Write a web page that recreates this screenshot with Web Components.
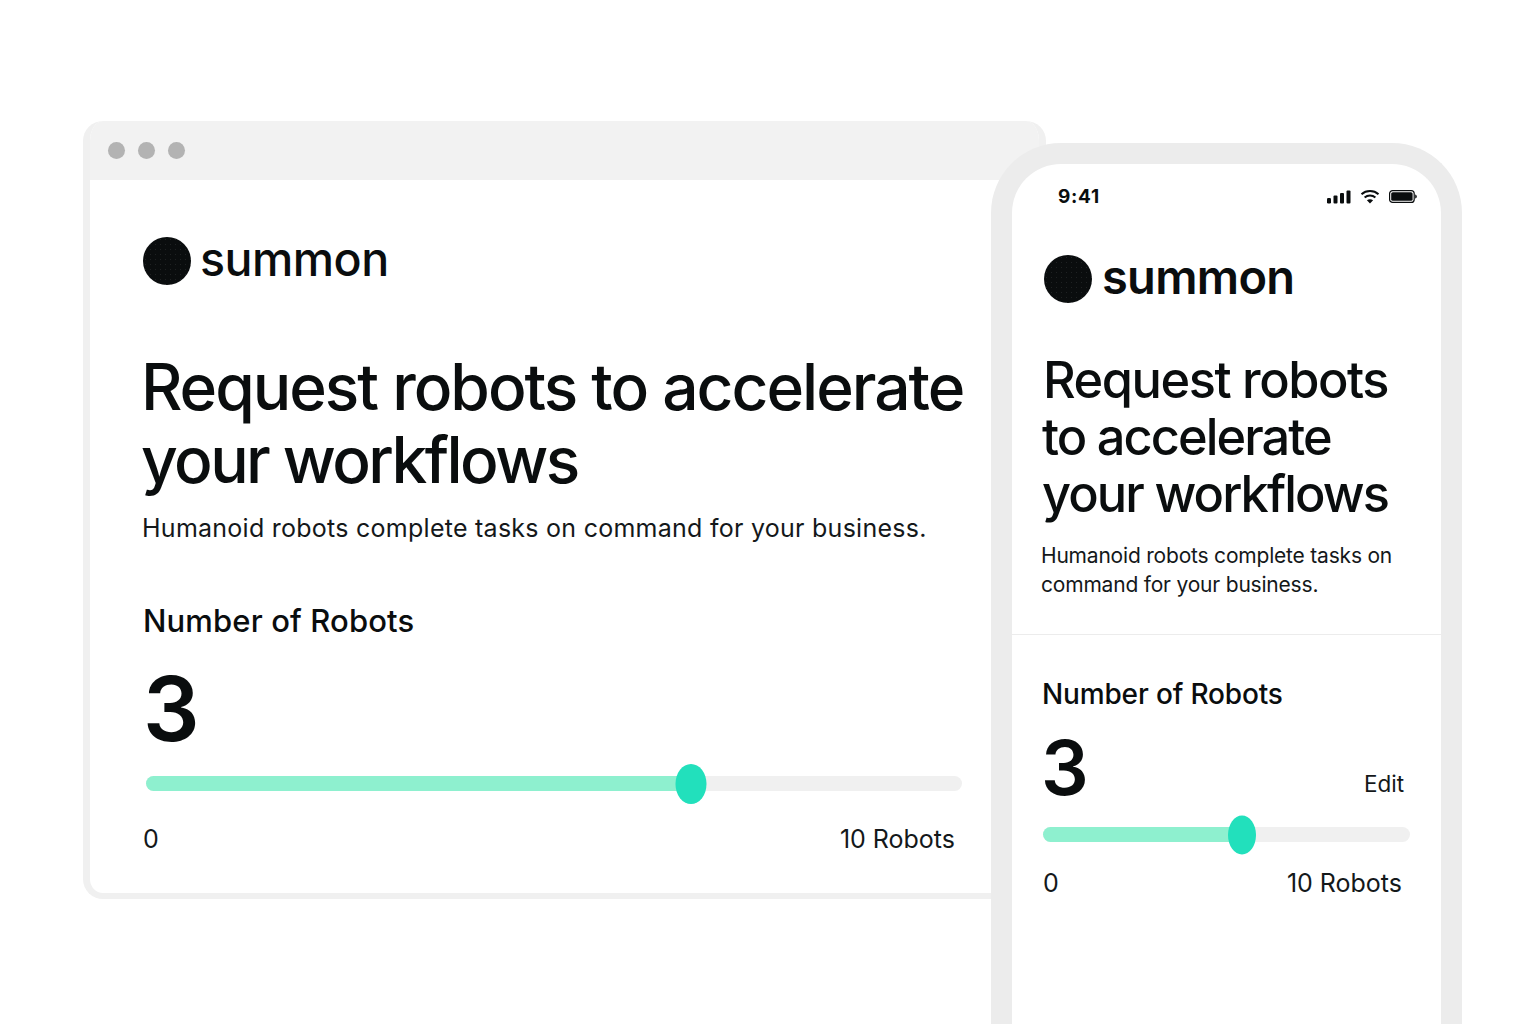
<!DOCTYPE html>
<html lang="en">
<head>
<meta charset="utf-8">
<title>summon</title>
<style>
html,body{margin:0;height:100%;background:#fff;overflow:hidden}
body{font-family:Inter,"Liberation Sans",sans-serif;color:#0a0d0e}
</style>
</head>
<body>
<browser-window>
  <summon-logo style="--dot:48px;--size:46.5px;--gap:9px;--ls:-.5px"></summon-logo>
  <h-title style="--size:64px;--lh:72.5px;--ls:-2px;margin:66px 0 0 -2px">Request robots to accelerate<br><span style="letter-spacing:-2.55px">your workflows</span></h-title>
  <sub-text style="--size:25px;--lh:30px;--ls:.26px;margin:17px 0 0 -1px">Humanoid robots complete tasks on command for your business.</sub-text>
  <robot-slider style="margin-top:59px" style-name="desktop"></robot-slider>
</browser-window>

<phone-frame>
  <status-bar></status-bar>
  <summon-logo style="--dot:48px;--size:47px;--gap:10px;--ls:-.7px;--w:600;margin:47px 0 0 32px"></summon-logo>
  <h-title style="--size:50.5px;--lh:57px;--ls:-1.46px;margin:48px 0 0 31px">Request robots<br><span style="letter-spacing:-1.95px;margin-left:-1px">to accelerate</span><br><span style="letter-spacing:-1.9px;margin-left:-1px">your workflows</span></h-title>
  <sub-text style="--size:21px;--lh:29px;--ls:-.2px;margin:19px 0 0 29px">Humanoid robots complete tasks on<br>command for your business.</sub-text>
  <hr-line style="margin-top:35px"></hr-line>
  <robot-slider style-name="mobile" edit style="margin-top:42px"></robot-slider>
</phone-frame>

<script>
class BrowserWindow extends HTMLElement {
  constructor(){
    super()
    this.attachShadow({mode:'open'})
    this.shadowRoot.innerHTML=`
    <style>
    :host{position:absolute;left:83px;top:121px;width:963px;height:778px;box-sizing:border-box;
      background:#fff;border:solid #f0f0f0;border-width:0 7px 6px 7px;border-radius:20px;display:block;overflow:hidden}
    .bar{height:59px;background:#f2f2f2;display:flex;align-items:center;gap:13px;margin:0 -7px;padding-left:25px;box-sizing:border-box}
    .bar i{display:block;width:17px;height:17px;border-radius:50%;background:#b3b3b3}
    .body{padding:57px 0 0 53px;display:flex;flex-direction:column;align-items:flex-start}
    </style>
    <div class="bar"><i></i><i></i><i></i></div>
    <div class="body"><slot></slot></div>`
  }
}
class PhoneFrame extends HTMLElement {
  constructor(){
    super()
    this.attachShadow({mode:'open'})
    this.shadowRoot.innerHTML=`
    <style>
    :host{position:absolute;left:991px;top:143px;width:471px;height:881px;box-sizing:border-box;
      background:#fff;border:solid #ececec;border-width:21px 21px 0 21px;border-radius:70px 70px 0 0;display:flex;flex-direction:column;align-items:flex-start;--inner:429px}
    ::slotted(*){flex:none}
    </style>
    <slot></slot>`
  }
}
class SummonLogo extends HTMLElement {
  constructor(){
    super()
    this.attachShadow({mode:'open'})
    this.shadowRoot.innerHTML=`
    <style>
    :host{display:flex;align-items:center;gap:var(--gap);line-height:48px;height:48px}
    .dot{width:var(--dot);height:var(--dot);border-radius:50%;background:#0a0d0e;
      background-image:radial-gradient(#1f2223 0.6px,transparent 0.8px);background-size:5px 5px}
    .name{font-size:var(--size);font-weight:var(--w,500);letter-spacing:var(--ls);color:#0a0d0e;position:relative;top:-2px}
    </style>
    <div class="dot"></div><div class="name">summon</div>`
  }
}
class HTitle extends HTMLElement {
  constructor(){
    super()
    this.attachShadow({mode:'open'})
    this.shadowRoot.innerHTML=`
    <style>
    :host{display:block;font-size:var(--size);line-height:var(--lh);letter-spacing:var(--ls);font-weight:500;color:#0a0d0e;white-space:nowrap}
    </style>
    <slot></slot>`
  }
}
class SubText extends HTMLElement {
  constructor(){
    super()
    this.attachShadow({mode:'open'})
    this.shadowRoot.innerHTML=`
    <style>
    :host{display:block;font-size:var(--size);line-height:var(--lh);letter-spacing:var(--ls);font-weight:400;color:#14181a;white-space:nowrap}
    </style>
    <slot></slot>`
  }
}
class HrLine extends HTMLElement {
  constructor(){
    super()
    this.attachShadow({mode:'open'})
    this.shadowRoot.innerHTML=`
    <style>:host{display:block;width:var(--inner);height:1px;background:#ececec}</style>`
  }
}
class StatusBar extends HTMLElement {
  constructor(){
    super()
    this.attachShadow({mode:'open'})
    this.shadowRoot.innerHTML=`
    <style>
    :host{display:flex;width:var(--inner);box-sizing:border-box;padding:21px 24px 0 46px;justify-content:space-between;align-items:center;height:44px}
    .time{font-size:19px;font-weight:700;letter-spacing:.7px;color:#0a0d0e;line-height:24px}
    .icons{display:flex;align-items:center;gap:9px}
    svg{display:block}
    </style>
    <div class="time">9:41</div>
    <div class="icons">
      <svg width="24" height="14" viewBox="0 0 24 14"><rect x="0" y="8" width="4" height="5.5" rx="1.2" fill="#0a0d0e"/><rect x="6.5" y="5.5" width="4" height="8" rx="1" fill="#0a0d0e"/><rect x="13" y="3" width="4" height="10.5" rx="1" fill="#0a0d0e"/><rect x="19.5" y=".5" width="4" height="13" rx="1" fill="#0a0d0e"/></svg>
      <svg width="20" height="15" viewBox="0 0 20 15"><path d="M1.5 5.2C6.2 .9 13.8 .9 18.5 5.2M4.6 8.4C7.6 5.8 12.4 5.8 15.4 8.4" fill="none" stroke="#0a0d0e" stroke-width="2"/><path d="M10 14.5 6.9 11.2C8.7 9.8 11.3 9.8 13.1 11.2Z" fill="#0a0d0e"/></svg>
      <svg width="28" height="13" viewBox="0 0 28 13"><rect x=".6" y=".6" width="24.6" height="11.8" rx="3" fill="#fff" stroke="#0a0d0e" stroke-width="1.2"/><rect x="2.2" y="2.2" width="21.4" height="8.6" rx="1.6" fill="#0a0d0e"/><path d="M26.2 4.4c1 .3 1.6 1.1 1.6 2.1s-.6 1.8-1.6 2.1z" fill="#0a0d0e"/></svg>
    </div>`
  }
}
class RobotSlider extends HTMLElement {
  constructor(){
    super()
    this.attachShadow({mode:'open'})
    this.render()
  }
  render(){
    const mobile = this.getAttribute('style-name') === 'mobile'
    const edit = this.hasAttribute('edit') ? '<span class="edit">Edit</span>' : ''
    this.shadowRoot.innerHTML=`
    <style>
    :host{display:block;color:#0a0d0e}
    .label{font-weight:500;white-space:nowrap}
    .row{display:flex;justify-content:space-between;align-items:flex-end}
    .num{font-weight:500}
    .edit{font-size:22.5px;line-height:30px;color:#14181a}
    .track{position:relative;height:15px;border-radius:8px;background:#f0f0f0}
    .fill{height:100%;border-radius:8px;background:#8ef0cf}
    .thumb{position:absolute;top:50%;transform:translate(-50%,-50%);border-radius:50%;background:#22e0bc}
    .ends{display:flex;justify-content:space-between;color:#14181a}
    ${mobile ? `
    :host{width:var(--inner);box-sizing:border-box;padding:0 31px 0 30px}
    .label{font-size:28px;line-height:34px;letter-spacing:-.15px}
    .row{margin-top:17px;margin-right:6px;height:80px}
    .num{font-size:75px;line-height:80px;font-weight:600;margin-left:-1px}
    .edit{margin-bottom:9px}
    .track{margin-top:19px;margin-left:1px}
    .fill{width:199px}
    .thumb{left:199px;width:28px;height:39px}
    .ends{font-size:25px;line-height:30px;margin:26px 8px 0 1px}
    ` : `
    :host{width:819px}
    .label{font-size:31px;line-height:38px;letter-spacing:.13px}
    .row{margin-top:24px;height:90px}
    .num{font-size:89px;line-height:90px;font-weight:600}
    .track{margin-top:22px;margin-left:3px}
    .fill{width:545px}
    .thumb{left:545px;width:31px;height:40px}
    .ends{font-size:25px;line-height:30px;margin:33px 7px 0 0}
    `}
    </style>
    <div class="label">Number of Robots</div>
    <div class="row"><span class="num">3</span>${edit}</div>
    <div class="track"><div class="fill"></div><div class="thumb"></div></div>
    <div class="ends"><span>0</span><span>10 Robots</span></div>`
  }
}
customElements.define('browser-window', BrowserWindow)
customElements.define('phone-frame', PhoneFrame)
customElements.define('summon-logo', SummonLogo)
customElements.define('h-title', HTitle)
customElements.define('sub-text', SubText)
customElements.define('hr-line', HrLine)
customElements.define('status-bar', StatusBar)
customElements.define('robot-slider', RobotSlider)
</script>
</body>
</html>
